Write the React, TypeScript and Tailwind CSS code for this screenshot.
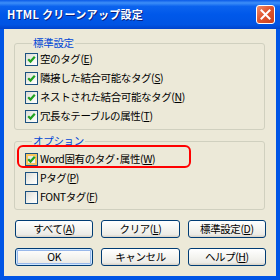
import type { ReactNode } from 'react';

const FONT = "font-['Noto_Sans_CJK_JP','Noto_Sans',sans-serif]";

type CheckProps = {
  checked?: boolean;
  hot?: boolean;
  children: ReactNode;
};

function CheckRow({ checked, hot, children }: CheckProps) {
  return (
    <div className="flex h-[19px] items-center gap-[2px]">
      <span
        className={`relative flex h-[13px] w-[13px] shrink-0 items-center justify-center border border-[#1C5180] bg-[linear-gradient(135deg,#DCDCD7_0%,#F4F4F0_60%,#FFFFFF_100%)] ${
          hot ? 'shadow-[inset_0_0_0_2px_#F9C55C]' : ''
        }`}
      >
        {checked && (
          <svg width="9" height="9" viewBox="0 0 9 9" className="relative">
            <polyline points="1.2,4.2 3.5,6.6 7.8,1.8" fill="none" stroke="#21A121" strokeWidth="2.2" />
          </svg>
        )}
      </span>
      <span className="text-[10.5px] leading-none tracking-[-0.4px] text-black">{children}</span>
    </div>
  );
}

function Group({ label, children, className = '' }: { label: string; children: ReactNode; className?: string }) {
  return (
    <fieldset className={`mr-[1px] rounded-[3px] border border-[#D0D0BF] pl-[10px] ${className}`}>
      <legend className="ml-[7px] h-[14px] px-[1px] text-[10.5px] leading-[14px] tracking-[-0.3px] text-[#0046D5]">
        {label}
      </legend>
      {children}
    </fieldset>
  );
}

function XpButton({ children, primary }: { children: ReactNode; primary?: boolean }) {
  return (
    <button
      className={`flex h-[18px] items-center justify-center rounded-[3px] border border-[#003C74] bg-[linear-gradient(to_bottom,#FFFFFF_0%,#F4F4F0_50%,#ECEBE6_85%,#D6D0C5_100%)] text-[10.5px] leading-none tracking-[-0.4px] text-black ${
        primary ? 'shadow-[inset_0_0_0_1px_#CEE7FF,inset_0_0_0_2px_#98B8EA]' : ''
      }`}
    >
      {children}
    </button>
  );
}

export default function App() {
  return (
    <div className={`flex h-[280px] w-[280px] flex-col bg-[#0055E5] ${FONT}`}>
      <div className="flex h-[29px] items-center bg-[linear-gradient(to_bottom,#0A5AE8_0%,#3D8FF8_10%,#0B63EE_22%,#0058EA_50%,#0054E3_85%,#0043CC_100%)] pl-[7px] pr-[5px]">
        <span className="text-[11px] font-bold tracking-[0.3px] text-white [text-shadow:1px_1px_0_#0A1F7D]">
          HTML クリーンアップ設定
        </span>
        <span className="ml-auto flex h-[19px] w-[19px] items-center justify-center rounded-[3px] border border-white bg-[linear-gradient(135deg,#F08C6C_0%,#E0562F_45%,#C8401E_100%)]">
          <svg width="11" height="11" viewBox="0 0 11 11">
            <path d="M1.5 1.5 L9.5 9.5 M9.5 1.5 L1.5 9.5" stroke="#FFFFFF" strokeWidth="2" strokeLinecap="square" />
          </svg>
        </span>
      </div>

      <div className="mx-[4px] mb-[4px] flex flex-1 flex-col bg-[#ECE9D8] px-[10px]">
        <Group label="標準設定" className="mt-[7px] pb-[3px]">
          <CheckRow checked>
            空のタグ(<u>E</u>)
          </CheckRow>
          <CheckRow checked>
            隣接した結合可能なタグ(<u>S</u>)
          </CheckRow>
          <CheckRow checked>
            ネストされた結合可能なタグ(<u>N</u>)
          </CheckRow>
          <CheckRow checked>
            冗長なテーブルの属性(<u>T</u>)
          </CheckRow>
        </Group>

        <Group label="オプション" className="mt-[4px] pb-[2px] pt-[2px]">
          <div className="relative">
            <div className="pointer-events-none absolute -left-[8px] -top-[5px] h-[23px] w-[174px] rounded-[6px] border-2 border-[#FF0000]" />
            <CheckRow checked hot>
              Word固有のタグ･属性(<u>W</u>)
            </CheckRow>
          </div>
          <CheckRow>
            Pタグ(<u>P</u>)
          </CheckRow>
          <CheckRow>
            FONTタグ(<u>F</u>)
          </CheckRow>
        </Group>

        <div className="ml-[1px] mt-[10px] grid grid-cols-3 gap-x-[8px] gap-y-[10px]">
          <XpButton>
            すべて(<u>A</u>)
          </XpButton>
          <XpButton>
            クリア(<u>L</u>)
          </XpButton>
          <XpButton>
            標準設定(<u>D</u>)
          </XpButton>
          <XpButton primary>OK</XpButton>
          <XpButton>キャンセル</XpButton>
          <XpButton>
            ヘルプ(<u>H</u>)
          </XpButton>
        </div>
      </div>
    </div>
  );
}
